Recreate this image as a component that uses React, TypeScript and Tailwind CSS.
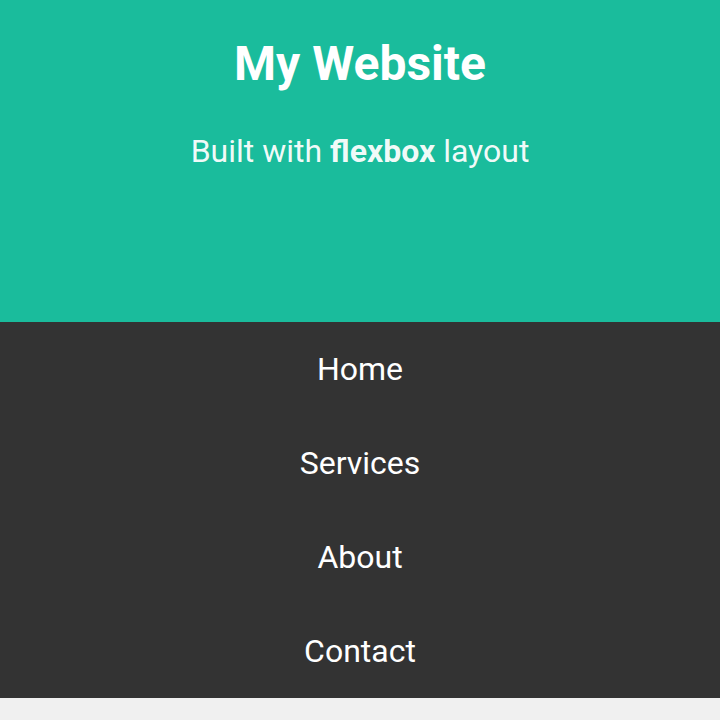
export default function App() {
  const items = ["Home", "Services", "About", "Contact"];
  return (
    <div className="min-h-[720px] bg-[#f0f0f0] text-white" style={{ fontFamily: "Roboto, sans-serif" }}>
      <header className="h-[322px] bg-[#1abc9c] flex flex-col items-center pt-[35px]">
        <h1 className="text-[48px] font-bold leading-[58px]">My Website</h1>
        <p className="mt-[39px] text-[32px] leading-[38px] text-white/95">
          Built with <strong className="font-bold">flexbox</strong> layout
        </p>
      </header>
      <nav className="bg-[#333333] flex flex-col">
        {items.map((t) => (
          <a key={t} className="h-[94px] flex items-center justify-center text-[32px]">
            {t}
          </a>
        ))}
      </nav>
    </div>
  );
}
